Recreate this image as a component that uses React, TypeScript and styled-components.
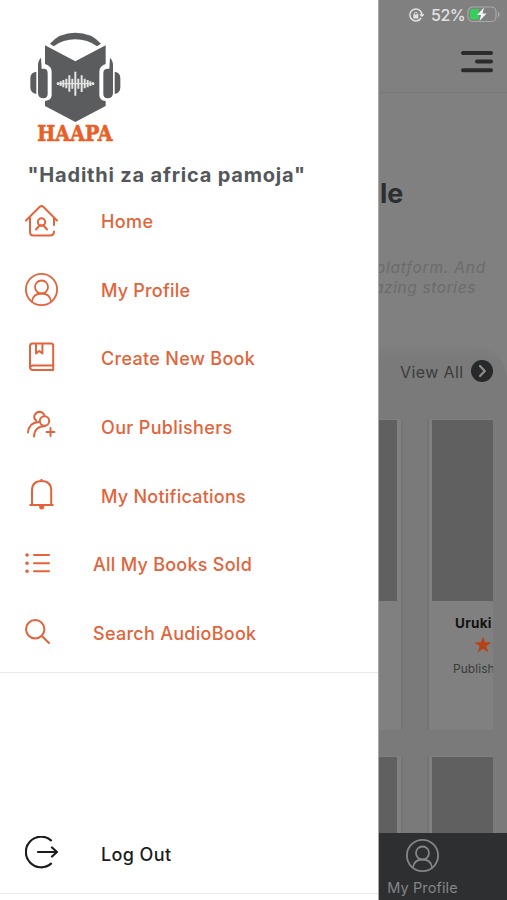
import React from "react";
import styled, { createGlobalStyle } from "styled-components";

const ORANGE = "#e2643a";

const GlobalStyle = createGlobalStyle`
  * { box-sizing: border-box; }
  body { margin: 0; background: #808080; font-family: Inter, "Liberation Sans", sans-serif; }
`;

const Screen = styled.div`
  display: grid;
  grid-template-columns: 378px 129px;
  width: 507px;
  height: 900px;
  overflow: hidden;
`;

const Drawer = styled.aside`
  display: flex;
  flex-direction: column;
  background: #fff;
  height: 900px;
`;

const Brand = styled.header`
  display: flex;
  flex-direction: column;
  flex: none;
  height: 187px;
  padding: 20px 0 0 15px;

  > svg { flex: none; }
`;

const Tagline = styled.div`
  margin: 12px 0 0 12.5px;
  font: 700 20px/26px Inter, sans-serif;
  letter-spacing: 0.8px;
  color: #54585a;
  white-space: nowrap;
`;

const Menu = styled.nav`
  display: flex;
  flex-direction: column;
  height: 486px;
  border-bottom: 1px solid #e9e9e9;
`;

const MenuItem = styled.a<{ $narrow?: boolean; $dark?: boolean }>`
  display: grid;
  grid-template-columns: ${(p) => (p.$narrow ? "68px" : "76px")} 1fr;
  align-items: center;
  height: 68.7px;
  flex: none;
  padding-left: 25px;
  color: ${(p) => (p.$dark ? "#1c1c1e" : ORANGE)};
`;

const MenuLabel = styled.span<{ $spacing: number; $drop?: number }>`
  padding-top: ${(p) => p.$drop ?? 1}px;
  font: 500 18px/24px Inter, sans-serif;
  letter-spacing: ${(p) => p.$spacing}px;
  white-space: nowrap;
`;

const LogoutArea = styled.div`
  display: flex;
  flex-direction: column;
  justify-content: flex-end;
  height: 221px;
  padding-bottom: 6px;
  border-bottom: 1px solid #e9e9e9;
`;

const Page = styled.main`
  display: flex;
  flex-direction: column;
  height: 900px;
  overflow: hidden;
  background: #808080;
  border-left: 1px solid #a8a8a8;
`;

const StatusBar = styled.div`
  display: flex;
  align-items: center;
  height: 30px;
  padding-left: 30px;
  color: #e2e2e2;
`;

const Percent = styled.span`
  margin: 0 3px 0 7px;
  width: 33px;
  font: 500 16px/20px Inter, sans-serif;
  letter-spacing: -0.5px;
  white-space: nowrap;
`;

const TopBar = styled.div`
  display: flex;
  justify-content: flex-end;
  height: 63px;
  padding: 20px 13px 0 0;
  border-bottom: 1px solid #7a7a7a;
`;

const Hero = styled.section`
  height: 253px;
  overflow: hidden;
`;

const HeroTitle = styled.h1`
  margin: 83px 0 0 1px;
  font: 700 27px/36px Inter, sans-serif;
  color: #2c2f30;
`;

const HeroText = styled.p`
  display: flex;
  flex-direction: column;
  align-items: flex-end;
  margin: 46px 21px 0 -20px;
  font: italic 400 15.5px/20px Inter, sans-serif;
  color: #6b6b6b;
  white-space: nowrap;
`;

const HeroLine = styled.span<{ $inset: number; $spacing: number }>`
  margin-right: ${(p) => p.$inset}px;
  letter-spacing: ${(p) => p.$spacing}px;
`;

const Shelf = styled.section`
  display: flex;
  flex-direction: column;
  height: 487px;
  overflow: hidden;
  background: linear-gradient(#7e7e7e, #7a7a7a 16px);
  border-top-right-radius: 32px 34px;
`;

const ShelfHead = styled.div`
  display: flex;
  align-items: center;
  flex: none;
  height: 50px;
  padding-left: 21px;
  gap: 5px;
`;

const ViewAll = styled.span`
  width: 66px;
  padding-top: 2px;
  font: 400 16px/22px Inter, sans-serif;
  letter-spacing: 0.4px;
  color: #3c3c3c;
  white-space: nowrap;
`;

const Books = styled.div`
  display: grid;
  grid-template-columns: 24px 66px;
  column-gap: 24px;
  grid-auto-rows: 311px;
  row-gap: 26px;
  width: 114px;
  margin-top: 23px;
  overflow: hidden;
`;

const Book = styled.article<{ $side: "left" | "right" }>`
  display: flex;
  flex-direction: column;
  align-items: flex-end;
  overflow: hidden;
  background: #808080;
  border-${(p) => (p.$side === "left" ? "right" : "left")}: 2px solid #747474;
  padding: 1px ${(p) => (p.$side === "left" ? "4px 0 0" : "0 0 3px")};
`;

const Cover = styled.div`
  flex: none;
  width: 100%;
  height: 181px;
  background: #606060;
`;

const BookTitle = styled.div`
  margin-top: 13px;
  width: 38px;
  font: 700 13.5px/18px Inter, sans-serif;
  letter-spacing: 0.3px;
  color: #121212;
  white-space: nowrap;
`;

const Rating = styled.div`
  display: flex;
  height: 18px;
  margin: 4px 1px 0 0;
`;

const Publisher = styled.div`
  width: 40px;
  margin-top: 7px;
  font: 400 12px/16px Inter, sans-serif;
  letter-spacing: 0.05px;
  color: #3b3b3b;
  white-space: nowrap;
`;

const TabBar = styled.footer`
  display: flex;
  flex: none;
  height: 67px;
  background: #2d2f31;
`;

const Tab = styled.div`
  display: flex;
  flex-direction: column;
  align-items: center;
  width: 87px;
  padding-top: 6px;
  gap: 5px;
  color: #858585;
  font: 400 14.5px/20px Inter, sans-serif;
  letter-spacing: 0.1px;
`;

const Logo = () => (
  <svg width="120" height="130" viewBox="0 0 360 390">
    <g fill="#5b5c5e">
      <path d="M105 71Q133 38 181 38Q229 38 258 71L246 79Q218 58 181 58Q144 58 116 79Z" />
      <path d="M90 76L181 124L272 76V132Q253 138 253 155V225Q253 242 272 243V258L181 306L90 258V243Q110 241 110 225V155Q110 138 90 132Z" />
      <path d="M64 155V222Q46 219 46 202V174Q46 158 64 155Z" />
      <path d="M299 155V222Q316 219 316 202V174Q316 158 299 155Z" />
      <path d="M69 140Q68 123 78 113L80 146H88Q98 147 98 160V222Q98 234 86 235Q69 235 69 219Z" />
      <path d="M294 140Q295 123 285 113L283 146H276Q265 147 265 160V222Q265 234 277 235Q294 235 294 219Z" />
    </g>
    <path d="M125 191H238" stroke="#ddd" strokeWidth="4" />
    <path
      d="M129 187V195M137 184V198M145 180V202M154 176V205M163 166V215M172 176V206M181 155V227M190 176V206M200 166V216M209 176V205M218 180V202M226 184V198M234 187V195"
      stroke="#e5e5e5"
      strokeWidth="6"
    />
    <text
      x="67"
      y="362"
      textLength="226"
      lengthAdjust="spacingAndGlyphs"
      fill="#e95f28"
      stroke="#e95f28"
      strokeWidth="2"
      fontFamily="DejaVu Serif, serif"
      fontWeight="700"
      fontSize="65"
    >
      HAAPA
    </text>
  </svg>
);

const lineIcon = {
  fill: "none",
  stroke: "currentColor",
  strokeWidth: 2,
  strokeLinecap: "round" as const,
  strokeLinejoin: "round" as const,
};

const HomeIcon = () => (
  <svg width="34" height="34" viewBox="0 0 34 34" {...lineIcon}>
    <path d="M1 16.500L14.500 3Q16.500 1 18.500 3L32 16.500M5 14V28Q5 31.500 8.500 31.500H25Q29 31.500 29 27.500M29 14V21" />
    <circle cx="16.500" cy="18" r="3.700" />
    <path d="M11 25.500L14 22Q16.500 20.500 19 22L22 25.500" />
  </svg>
);

const ProfileIcon = () => (
  <svg width="34" height="34" viewBox="0 0 34 34" {...lineIcon} strokeWidth={1.8}>
    <circle cx="16.500" cy="16.500" r="15.600" />
    <circle cx="16.500" cy="14" r="6.500" />
    <path d="M7 28.500Q8 20.500 16.500 20.500Q25 20.500 26 28.500" />
  </svg>
);

const BookIcon = () => (
  <svg width="34" height="34" viewBox="0 0 34 34" {...lineIcon}>
    <path d="M7.500 1.500H26Q28.200 1.500 28.200 3.700V28H8Q5 28 5 25V4Q5 1.500 7.500 1.500ZM5 26Q5 23.500 8 23.500H28.200M11 1.500V11.500L14.200 9L17.400 11.500V1.500" />
  </svg>
);

const PeopleIcon = () => (
  <svg width="34" height="34" viewBox="0 0 34 34" {...lineIcon}>
    <g transform="translate(-.5 -1.500)">
      <circle cx="20" cy="12.500" r="4.700" />
      <path d="M11.500 12Q8.500 9 10.500 6Q12.500 2.800 16.500 3.500Q19 4.200 20 7M3.500 24Q4 14.500 14 13.500M9.500 28Q10 18 20.500 17.500M26 19.500V27.500M22 23.500H30" />
    </g>
  </svg>
);

const BellIcon = () => (
  <svg width="34" height="34" viewBox="0 0 34 34" {...lineIcon} strokeLinecap="butt">
    <path d="M4.500 26H28.500M7 26V11.500Q7 2 16.500 2Q26.200 2 26.200 11.500V26M16.500 0V2" />
    <path d="M14 27H19.300Q19.300 30.500 16.600 30.500Q14 30.500 14 27Z" fill="currentColor" stroke="none" />
  </svg>
);

const ListIcon = () => (
  <svg width="26" height="28" viewBox="0 0 26 28" {...lineIcon}>
    <path d="M9 4H24M9 12.200H24M9 20.300H24" />
    <path d="M2 4H2.100M2 12.200H2.100M2 20.300H2.100" strokeWidth="3.600" />
  </svg>
);

const SearchIcon = () => (
  <svg width="26" height="28" viewBox="0 0 26 28" {...lineIcon}>
    <circle cx="10.200" cy="10.200" r="9.200" />
    <path d="M16.800 17L24 24" />
  </svg>
);

const LogoutIcon = () => (
  <svg width="34" height="34" viewBox="0 0 34 34" {...lineIcon} strokeWidth={2.2}>
    <path d="M26 4.300A15.300 15.300 0 1 0 26 27.700M13 16H32M27 11.500L32 16L27 20.500" />
  </svg>
);

const ITEMS = [
  { label: "Home", icon: <HomeIcon />, spacing: 0.4 },
  { label: "My Profile", icon: <ProfileIcon />, spacing: 0.2 },
  { label: "Create New Book", icon: <BookIcon />, spacing: 0.32 },
  { label: "Our Publishers", icon: <PeopleIcon />, spacing: 0.34 },
  { label: "My Notifications", icon: <BellIcon />, spacing: 0.24 },
  { label: "All My Books Sold", icon: <ListIcon />, spacing: 0.26, narrow: true },
  { label: "Search AudioBook", icon: <SearchIcon />, spacing: 0.28, narrow: true },
];

const LockIcon = () => (
  <svg width="15" height="15" viewBox="0 0 15 15" fill="none" stroke="currentColor" strokeWidth="1.500">
    <path d="M11.600 3.300A6 6 0 1 0 12 10M11.600 3.300Q13 5 12.900 7.500M11 6.200L12.900 8L14.700 6.200" />
    <rect x="4.300" y="6.500" width="5" height="4" fill="currentColor" stroke="none" />
    <path d="M5.300 7V5.500Q5.300 4.300 6.800 4.300Q8.300 4.300 8.300 5.500V7" strokeWidth="1" />
  </svg>
);

const BatteryIcon = () => (
  <svg width="33" height="18" viewBox="0 0 33 18">
    <rect x="1" y="1" width="28" height="14.500" rx="4.500" fill="none" stroke="#aaa" strokeWidth="1.200" />
    <path d="M31 5.500V11.500Q32.500 10.500 32.500 8.500T31 5.500Z" fill="#aaa" />
    <path d="M5 3H12V13.500H5Q3 13.500 3 11.500V5Q3 3 5 3Z" fill="#35cf59" />
    <path d="M17 1.500L10 9H14L12.500 15L19.500 7.500H15.500Z" fill="#f5f5f5" />
  </svg>
);

const MenuIcon = () => (
  <svg width="34" height="24" viewBox="0 0 34 24" stroke="#292b2c" strokeWidth="4" strokeLinecap="round">
    <path d="M3 3H31M17 11.500H31M3 20.300H31" />
  </svg>
);

const ArrowBadge = () => (
  <svg width="22" height="22" viewBox="0 0 22 22" fill="none">
    <circle cx="11" cy="11" r="11" fill="#272829" />
    <path d="M9 6L13.800 11L9 16" stroke="#8e8e8e" strokeWidth="2.200" strokeLinecap="round" strokeLinejoin="round" />
  </svg>
);

const Star = () => (
  <svg width="18" height="18" viewBox="0 0 18 18">
    <path d="M9 .5L11.100 6.300H17.500L12.400 10.200L14.300 16.500L9 12.800L3.700 16.500L5.600 10.200L.5 6.300H6.900Z" fill="#b64318" />
  </svg>
);

export default function App() {
  return (
    <>
      <GlobalStyle />
      <Screen>
        <Drawer>
          <Brand>
            <Logo />
            <Tagline>"Hadithi za africa pamoja"</Tagline>
          </Brand>
          <Menu>
            {ITEMS.map((item) => (
              <MenuItem key={item.label} $narrow={item.narrow}>
                {item.icon}
                <MenuLabel $spacing={item.spacing}>{item.label}</MenuLabel>
              </MenuItem>
            ))}
          </Menu>
          <LogoutArea>
            <MenuItem $dark>
              <LogoutIcon />
              <MenuLabel $spacing={0.4} $drop={4}>Log Out</MenuLabel>
            </MenuItem>
          </LogoutArea>
        </Drawer>
        <Page>
          <StatusBar>
            <LockIcon />
            <Percent>52%</Percent>
            <BatteryIcon />
          </StatusBar>
          <TopBar>
            <MenuIcon />
          </TopBar>
          <Hero>
            <HeroTitle>le</HeroTitle>
            <HeroText>
              <HeroLine $inset={0} $spacing={0.8}>platform. And</HeroLine>
              <HeroLine $inset={10} $spacing={0.6}>azing stories</HeroLine>
            </HeroText>
          </Hero>
          <Shelf>
            <ShelfHead>
              <ViewAll>View All</ViewAll>
              <ArrowBadge />
            </ShelfHead>
            <Books>
              <Book $side="left">
                <Cover />
              </Book>
              <Book $side="right">
                <Cover />
                <BookTitle>Uruki</BookTitle>
                <Rating>
                  <Star />
                </Rating>
                <Publisher>Publish</Publisher>
              </Book>
              <Book $side="left">
                <Cover />
              </Book>
              <Book $side="right">
                <Cover />
              </Book>
            </Books>
          </Shelf>
          <TabBar>
            <Tab>
              <ProfileIcon />
              My Profile
            </Tab>
          </TabBar>
        </Page>
      </Screen>
    </>
  );
}
